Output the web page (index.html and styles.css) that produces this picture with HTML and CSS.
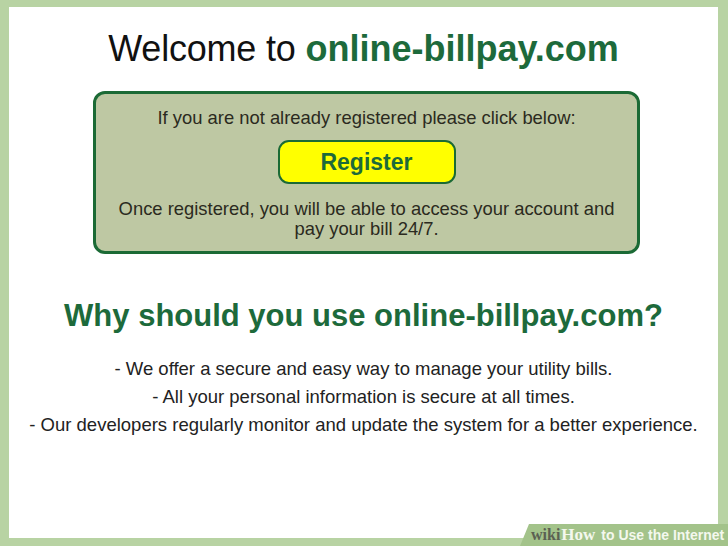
FILE: index.html
```html
<!DOCTYPE html>
<html>
<head>
<meta charset="utf-8">
<link rel="stylesheet" href="styles.css">
</head>
<body>
<div class="frame">
  <main class="panel">
    <h1 class="title">Welcome to <span class="brand">online-billpay.com</span></h1>
    <section class="box">
      <p class="box-text">If you are not already registered please click below:</p>
      <button class="register">Register</button>
      <p class="box-text box-note">Once registered, you will be able to access your account and<br>pay your bill 24/7.</p>
    </section>
    <h2 class="why">Why should you use online-billpay.com?</h2>
    <ul class="reasons">
      <li>- We offer a secure and easy way to manage your utility bills.</li>
      <li>- All your personal information is secure at all times.</li>
      <li>- Our developers regularly monitor and update the system for a better experience.</li>
    </ul>
  </main>
  <div class="wiki"><span class="wiki-w">wiki</span><span class="wiki-h">How</span><span class="wiki-t">to Use the Internet</span></div>
</div>
</body>
</html>
```
FILE: styles.css
```css
html, body {
  margin: 0;
  padding: 0;
}
body {
  width: 728px;
  height: 546px;
  background: #b8d3a3;
  font-family: "Liberation Sans", Arial, sans-serif;
  overflow: hidden;
}
.frame {
  position: relative;
  width: 728px;
  height: 546px;
  padding: 7px 10px 8px 9px;
  box-sizing: border-box;
}
.panel {
  background: #ffffff;
  height: 100%;
  display: flex;
  flex-direction: column;
  align-items: center;
}
.title {
  margin: 22px 0 0;
  font-size: 36px;
  font-weight: normal;
  color: #111;
  line-height: 40px;
  letter-spacing: -0.2px;
}
.brand {
  font-weight: bold;
  color: #1d6a3b;
  letter-spacing: 0;
}
.box {
  margin-top: 22px;
  margin-left: 6px;
  width: 547px;
  height: 163px;
  box-sizing: border-box;
  border: 3px solid #1b6a35;
  border-radius: 12px;
  background: #bec8a3;
  display: flex;
  flex-direction: column;
  align-items: center;
}
.box-text {
  margin: 14px 0 0;
  font-size: 18.4px;
  line-height: 20px;
  color: #2b2a20;
  text-align: center;
}
.register {
  margin-top: 12px;
  width: 178px;
  height: 44px;
  background: #ffff00;
  border: 2px solid #1b6a35;
  border-radius: 11px;
  font-family: "Liberation Sans", Arial, sans-serif;
  font-weight: bold;
  font-size: 23px;
  color: #1d6a3b;
  padding: 0;
}
.box-note {
  margin-top: 15px;
}
.why {
  margin: 45px 0 0;
  font-size: 31px;
  line-height: 34px;
  color: #1d6a3b;
  font-weight: bold;
}
.reasons {
  list-style: none;
  margin: 22px 0 0;
  padding: 0;
  text-align: center;
  font-size: 18.5px;
  line-height: 28px;
  color: #222;
}
.wiki {
  position: absolute;
  right: 0;
  bottom: 0;
  height: 22px;
  width: 208px;
  padding-left: 11px;
  box-sizing: border-box;
  background: #a3c38a;
  clip-path: polygon(9px 0, 100% 0, 100% 100%, 0 100%);
  display: flex;
  align-items: center;
  font-weight: bold;
  color: #f4f8ee;
  white-space: nowrap;
}
.wiki-w {
  font-family: "Liberation Serif", serif;
  color: #5b6052;
  font-size: 16px;
}
.wiki-h {
  font-family: "Liberation Serif", serif;
  font-size: 17px;
  margin-left: 1px;
}
.wiki-t {
  font-family: "Liberation Sans", Arial, sans-serif;
  font-size: 14px;
  margin-left: 6px;
}
```
